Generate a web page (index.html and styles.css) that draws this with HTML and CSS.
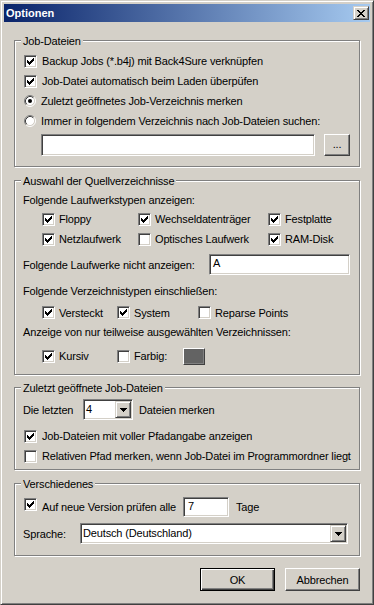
FILE: index.html
```html
<!DOCTYPE html>
<html lang="de">
<head>
<meta charset="utf-8">
<title>Optionen</title>
<link rel="stylesheet" href="styles.css">
</head>
<body>
<div class="window">
  <div class="titlebar">
    <span class="title">Optionen</span>
    <span class="close"><svg width="8" height="7" viewBox="0 0 8 7" shape-rendering="crispEdges"><path d="M0 0h2v1h-2z M6 0h2v1h-2z M1 1h2v1h-2z M5 1h2v1h-2z M2 2h4v1h-4z M3 3h2v1h-2z M2 4h4v1h-4z M1 5h2v1h-2z M5 5h2v1h-2z M0 6h2v1h-2z M6 6h2v1h-2z"/></svg></span>
  </div>
  <div class="client">
    <div class="group g1">
      <div class="legend">Job-Dateien</div>
      <div class="row opt first"><span class="cb"><svg class="chk" width="7" height="7" viewBox="0 0 7 7" shape-rendering="crispEdges"><path d="M6 0h1v1h-1z M5 1h2v1h-2z M0 2h1v1h-1z M4 2h3v1h-3z M0 3h2v1h-2z M3 3h3v1h-3z M0 4h5v1h-5z M1 5h3v1h-3z M2 6h1v1h-1z"/></svg></span><span>Backup Jobs (*.b4j) mit Back4Sure verknüpfen</span></div>
      <div class="row opt"><span class="cb"><svg class="chk" width="7" height="7" viewBox="0 0 7 7" shape-rendering="crispEdges"><path d="M6 0h1v1h-1z M5 1h2v1h-2z M0 2h1v1h-1z M4 2h3v1h-3z M0 3h2v1h-2z M3 3h3v1h-3z M0 4h5v1h-5z M1 5h3v1h-3z M2 6h1v1h-1z"/></svg></span><span>Job-Datei automatisch beim Laden überpüfen</span></div>
      <div class="row opt"><svg class="radio" width="13" height="12" viewBox="0 0 13 12"><circle cx="7" cy="6" r="4.5" fill="#fff"/><path d="M3.11 9.89A5.5 5.5 0 0 1 10.89 2.11" fill="none" stroke="#808080"/><path d="M10.89 2.11A5.5 5.5 0 0 1 3.11 9.89" fill="none" stroke="#fff"/><path d="M3.82 9.18A4.5 4.5 0 0 1 10.18 2.82" fill="none" stroke="#404040"/><path d="M10.18 2.82A4.5 4.5 0 0 1 3.82 9.18" fill="none" stroke="#d4d0c8"/><circle cx="7" cy="6" r="2" fill="#000"/></svg><span>Zuletzt geöffnetes Job-Verzeichnis merken</span></div>
      <div class="row opt"><svg class="radio" width="13" height="12" viewBox="0 0 13 12"><circle cx="7" cy="6" r="4.5" fill="#fff"/><path d="M3.11 9.89A5.5 5.5 0 0 1 10.89 2.11" fill="none" stroke="#808080"/><path d="M10.89 2.11A5.5 5.5 0 0 1 3.11 9.89" fill="none" stroke="#fff"/><path d="M3.82 9.18A4.5 4.5 0 0 1 10.18 2.82" fill="none" stroke="#404040"/><path d="M10.18 2.82A4.5 4.5 0 0 1 3.82 9.18" fill="none" stroke="#d4d0c8"/></svg><span>Immer in folgendem Verzeichnis nach Job-Dateien suchen:</span></div>
      <div class="pathrow">
        <div class="field path"></div>
        <div class="btn browse">...</div>
      </div>
    </div>

    <div class="group g2">
      <div class="legend">Auswahl der Quellverzeichnisse</div>
      <div class="label first2">Folgende Laufwerkstypen anzeigen:</div>
      <div class="drives">
        <div class="item"><span class="cb"><svg class="chk" width="7" height="7" viewBox="0 0 7 7" shape-rendering="crispEdges"><path d="M6 0h1v1h-1z M5 1h2v1h-2z M0 2h1v1h-1z M4 2h3v1h-3z M0 3h2v1h-2z M3 3h3v1h-3z M0 4h5v1h-5z M1 5h3v1h-3z M2 6h1v1h-1z"/></svg></span><span>Floppy</span></div>
        <div class="item"><span class="cb"><svg class="chk" width="7" height="7" viewBox="0 0 7 7" shape-rendering="crispEdges"><path d="M6 0h1v1h-1z M5 1h2v1h-2z M0 2h1v1h-1z M4 2h3v1h-3z M0 3h2v1h-2z M3 3h3v1h-3z M0 4h5v1h-5z M1 5h3v1h-3z M2 6h1v1h-1z"/></svg></span><span>Wechseldatenträger</span></div>
        <div class="item"><span class="cb"><svg class="chk" width="7" height="7" viewBox="0 0 7 7" shape-rendering="crispEdges"><path d="M6 0h1v1h-1z M5 1h2v1h-2z M0 2h1v1h-1z M4 2h3v1h-3z M0 3h2v1h-2z M3 3h3v1h-3z M0 4h5v1h-5z M1 5h3v1h-3z M2 6h1v1h-1z"/></svg></span><span>Festplatte</span></div>
        <div class="item"><span class="cb"><svg class="chk" width="7" height="7" viewBox="0 0 7 7" shape-rendering="crispEdges"><path d="M6 0h1v1h-1z M5 1h2v1h-2z M0 2h1v1h-1z M4 2h3v1h-3z M0 3h2v1h-2z M3 3h3v1h-3z M0 4h5v1h-5z M1 5h3v1h-3z M2 6h1v1h-1z"/></svg></span><span>Netzlaufwerk</span></div>
        <div class="item"><span class="cb"></span><span>Optisches Laufwerk</span></div>
        <div class="item"><span class="cb"><svg class="chk" width="7" height="7" viewBox="0 0 7 7" shape-rendering="crispEdges"><path d="M6 0h1v1h-1z M5 1h2v1h-2z M0 2h1v1h-1z M4 2h3v1h-3z M0 3h2v1h-2z M3 3h3v1h-3z M0 4h5v1h-5z M1 5h3v1h-3z M2 6h1v1h-1z"/></svg></span><span>RAM-Disk</span></div>
      </div>
      <div class="exclude">
        <span>Folgende Laufwerke nicht anzeigen:</span>
        <div class="field excl">A</div>
      </div>
      <div class="label row20 gap6">Folgende Verzeichnistypen einschließen:</div>
      <div class="types">
        <div class="item"><span class="cb"><svg class="chk" width="7" height="7" viewBox="0 0 7 7" shape-rendering="crispEdges"><path d="M6 0h1v1h-1z M5 1h2v1h-2z M0 2h1v1h-1z M4 2h3v1h-3z M0 3h2v1h-2z M3 3h3v1h-3z M0 4h5v1h-5z M1 5h3v1h-3z M2 6h1v1h-1z"/></svg></span><span>Versteckt</span></div>
        <div class="item"><span class="cb"><svg class="chk" width="7" height="7" viewBox="0 0 7 7" shape-rendering="crispEdges"><path d="M6 0h1v1h-1z M5 1h2v1h-2z M0 2h1v1h-1z M4 2h3v1h-3z M0 3h2v1h-2z M3 3h3v1h-3z M0 4h5v1h-5z M1 5h3v1h-3z M2 6h1v1h-1z"/></svg></span><span>System</span></div>
        <div class="item"><span class="cb"></span><span>Reparse Points</span></div>
      </div>
      <div class="label row20">Anzeige von nur teilweise ausgewählten Verzeichnissen:</div>
      <div class="partial">
        <div class="item kursiv"><span class="cb"><svg class="chk" width="7" height="7" viewBox="0 0 7 7" shape-rendering="crispEdges"><path d="M6 0h1v1h-1z M5 1h2v1h-2z M0 2h1v1h-1z M4 2h3v1h-3z M0 3h2v1h-2z M3 3h3v1h-3z M0 4h5v1h-5z M1 5h3v1h-3z M2 6h1v1h-1z"/></svg></span><span>Kursiv</span></div>
        <div class="item farbig"><span class="cb"></span><span>Farbig:</span></div>
        <div class="swatch"></div>
      </div>
    </div>

    <div class="group g3">
      <div class="legend">Zuletzt geöffnete Job-Dateien</div>
      <div class="recent">
        <span class="lbl-letzten">Die letzten</span>
        <div class="combo small"><span class="combo-text">4</span><span class="combo-btn"><svg width="7" height="4" viewBox="0 0 7 4" shape-rendering="crispEdges"><path d="M0 0h7v1h-7z M1 1h5v1h-5z M2 2h3v1h-3z M3 3h1v1h-1z"/></svg></span></div>
        <span class="after-combo">Dateien merken</span>
      </div>
      <div class="row opt gap6"><span class="cb"><svg class="chk" width="7" height="7" viewBox="0 0 7 7" shape-rendering="crispEdges"><path d="M6 0h1v1h-1z M5 1h2v1h-2z M0 2h1v1h-1z M4 2h3v1h-3z M0 3h2v1h-2z M3 3h3v1h-3z M0 4h5v1h-5z M1 5h3v1h-3z M2 6h1v1h-1z"/></svg></span><span>Job-Dateien mit voller Pfadangabe anzeigen</span></div>
      <div class="row opt"><span class="cb"></span><span>Relativen Pfad merken, wenn Job-Datei im Programmordner liegt</span></div>
    </div>

    <div class="group g4">
      <div class="legend">Verschiedenes</div>
      <div class="update">
        <span class="cb top1"><svg class="chk" width="7" height="7" viewBox="0 0 7 7" shape-rendering="crispEdges"><path d="M6 0h1v1h-1z M5 1h2v1h-2z M0 2h1v1h-1z M4 2h3v1h-3z M0 3h2v1h-2z M3 3h3v1h-3z M0 4h5v1h-5z M1 5h3v1h-3z M2 6h1v1h-1z"/></svg></span>
        <span class="lbl-update">Auf neue Version prüfen alle</span>
        <div class="field days">7</div>
        <span class="tage">Tage</span>
      </div>
      <div class="lang">
        <span class="lbl-lang">Sprache:</span>
        <div class="combo wide"><span class="combo-text">Deutsch (Deutschland)</span><span class="combo-btn"><svg width="7" height="4" viewBox="0 0 7 4" shape-rendering="crispEdges"><path d="M0 0h7v1h-7z M1 1h5v1h-5z M2 2h3v1h-3z M3 3h1v1h-1z"/></svg></span></div>
      </div>
    </div>

    <div class="buttons">
      <div class="btn default">OK</div>
      <div class="btn">Abbrechen</div>
    </div>
  </div>
</div>
</body>
</html>
```

FILE: styles.css
```css
* { box-sizing: border-box; }

body {
  margin: 0;
  background: #d4d0c8;
  font-family: "Liberation Sans", Arial, sans-serif;
  font-size: 11px;
  letter-spacing: -0.15px;
  color: #000;
}

.window {
  width: 374px;
  height: 605px;
  border: 1px solid;
  border-color: #d4d0c8 #404040 #404040 #d4d0c8;
  box-shadow: inset 1px 1px 0 #fff, inset -1px -1px 0 #808080;
  padding: 3px;
  background: #d4d0c8;
}

.titlebar {
  height: 18px;
  display: flex;
  align-items: flex-start;
  justify-content: space-between;
  padding: 0 1px 0 2px;
  background: linear-gradient(to right, #0a246a, #a6caf0);
}

.title {
  color: #fff;
  font-weight: bold;
  letter-spacing: 0;
  line-height: 18px;
}

.close {
  margin-top: 2px;
  width: 16px;
  height: 14px;
  display: flex;
  align-items: center;
  justify-content: center;
  background: #d4d0c8;
  border: 1px solid;
  border-color: #d4d0c8 #404040 #404040 #d4d0c8;
  box-shadow: inset 1px 1px 0 #fff, inset -1px -1px 0 #808080;
}

.client { padding: 0 10px; }

.group {
  border: 1px solid #808080;
  box-shadow: 1px 1px 0 #fff, inset 1px 1px 0 #fff;
  padding: 0 9px 0 8px;
}
.g1 { margin-top: 18px; padding-bottom: 10px; }
.g2 { margin-top: 13px; padding-bottom: 8px; }
.g3 { margin-top: 12px; padding-bottom: 3px; }
.g4 { margin-top: 13px; padding-bottom: 11px; }

.legend {
  display: table;
  margin: -6px 0 0 -2px;
  padding: 0 2px;
  line-height: 13px;
  background: #d4d0c8;
}

.row {
  display: flex;
  align-items: center;
  height: 20px;
  line-height: 20px;
  white-space: nowrap;
}
.row.first { margin-top: 3px; }
.gap6 { margin-top: 6px; }

.opt .cb { margin: 0 5px 0 1px; }
.opt .radio { margin-right: 5px; flex: none; }

.cb {
  flex: none;
  width: 13px;
  height: 13px;
  display: flex;
  align-items: center;
  justify-content: center;
  background: #fff;
  border: 1px solid;
  border-color: #808080 #fff #fff #808080;
  box-shadow: inset 1px 1px 0 #404040, inset -1px -1px 0 #d4d0c8;
}

.field {
  background: #fff;
  border: 1px solid;
  border-color: #808080 #fff #fff #808080;
  box-shadow: inset 1px 1px 0 #404040, inset -1px -1px 0 #d4d0c8;
  padding-left: 2px;
  white-space: nowrap;
}

.btn {
  width: 75px;
  height: 23px;
  display: flex;
  align-items: center;
  justify-content: center;
  background: #d4d0c8;
  border: 1px solid;
  border-color: #fff #404040 #404040 #fff;
  box-shadow: inset -1px -1px 0 #808080, inset 1px 1px 0 #d4d0c8;
}
.btn.default {
  border-color: #000;
  box-shadow: inset 1px 1px 0 #fff, inset -1px -1px 0 #404040, inset -2px -2px 0 #808080;
}

.pathrow {
  display: flex;
  margin-top: 3px;
  height: 22px;
}
.field.path { width: 274px; height: 22px; margin-left: 18px; }
.btn.browse { width: 26px; height: 22px; margin-left: 9px; padding-bottom: 2px; }

.label { white-space: nowrap; }
.first2 { margin-top: 4px; height: 17px; line-height: 17px; }
.row20 { height: 20px; line-height: 20px; }

.item {
  display: flex;
  align-items: center;
  white-space: nowrap;
}
.item .cb { margin-right: 4px; }

.drives {
  display: grid;
  grid-template-columns: 96px 130px 1fr;
  grid-auto-rows: 20px;
  margin-left: 19px;
}

.exclude {
  display: flex;
  align-items: center;
  margin-top: 5px;
  height: 21px;
  white-space: nowrap;
}
.field.excl {
  margin-left: auto;
  width: 141px;
  height: 21px;
  line-height: 17px;
  padding-left: 3px;
}

.types {
  display: grid;
  grid-template-columns: 75px 81px 1fr;
  height: 19px;
  margin-top: 2px;
  margin-left: 19px;
}

.partial {
  display: flex;
  align-items: center;
  height: 20px;
  margin-top: 4px;
  margin-left: 19px;
}
.kursiv { width: 75px; }
.farbig { width: 66px; }
.swatch {
  width: 22px;
  height: 17px;
  background: #636363;
  border: 1px solid;
  border-color: #fff #404040 #404040 #fff;
  box-shadow: inset -1px -1px 0 #808080;
}

.recent {
  display: flex;
  align-items: center;
  height: 21px;
  margin-top: 4px;
  white-space: nowrap;
}
.lbl-letzten { width: 60px; }
.after-combo { margin-left: 6px; }

.combo {
  display: flex;
  height: 21px;
  background: #fff;
  border: 1px solid;
  border-color: #808080 #fff #fff #808080;
  box-shadow: inset 1px 1px 0 #404040, inset -1px -1px 0 #d4d0c8;
  padding: 1px;
}
.combo.small { width: 50px; }
.combo.wide { width: 268px; }
.combo-text {
  flex: 1;
  line-height: 17px;
  padding-left: 1px;
  white-space: nowrap;
}
.combo-btn {
  width: 16px;
  height: 17px;
  display: flex;
  align-items: center;
  justify-content: center;
  background: #d4d0c8;
  border: 1px solid;
  border-color: #d4d0c8 #404040 #404040 #d4d0c8;
  box-shadow: inset 1px 1px 0 #fff, inset -1px -1px 0 #808080;
}

.update {
  display: flex;
  align-items: flex-start;
  height: 20px;
  margin-top: 6px;
  line-height: 20px;
  white-space: nowrap;
}
.update .cb { margin: 1px 5px 0 1px; }
.lbl-update { width: 141px; }
.field.days { width: 46px; height: 20px; line-height: 16px; padding-left: 4px; }
.tage { margin-left: 7px; }

.lang {
  display: flex;
  align-items: center;
  height: 21px;
  margin-top: 6px;
  white-space: nowrap;
}
.lbl-lang { width: 57px; }

.buttons {
  display: flex;
  justify-content: flex-end;
  gap: 10px;
  margin-top: 12px;
}
```
